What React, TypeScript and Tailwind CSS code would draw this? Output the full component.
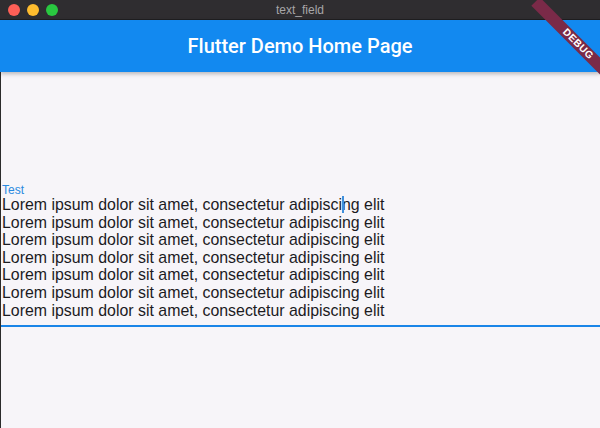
const LINES = Array.from({ length: 7 }, () => 'Lorem ipsum dolor sit amet, consectetur adipiscing elit');

const TitleBar = () => (
    <div className="relative flex h-[20px] shrink-0 items-center border-b border-[#1f1e20] bg-[#2f2d30]">
        <div className="flex items-center gap-[7px] pl-[8px]">
            <span className="h-[12px] w-[12px] rounded-full bg-[#fe5f57]" />
            <span className="h-[12px] w-[12px] rounded-full bg-[#febc2e]" />
            <span className="h-[12px] w-[12px] rounded-full bg-[#29c840]" />
        </div>
        <span className="absolute inset-x-0 text-center text-[12px] leading-none text-[#a7a6a8]">
            text_field
        </span>
    </div>
);

export default function App() {
    return (
        <div
            className="relative flex h-[428px] w-[600px] flex-col overflow-hidden bg-[#f7f5f9]"
            style={{ fontFamily: '"Liberation Sans", Arial, sans-serif' }}
        >
            <TitleBar />

            <header className="z-10 flex h-[52px] shrink-0 items-center justify-center bg-[#1289f0] shadow-[0_2px_4px_rgba(0,0,0,0.25)]">
                <h1 className="font-['Roboto',sans-serif] text-[20px] font-medium text-white">
                    Flutter Demo Home Page
                </h1>
            </header>

            <main className="flex flex-1 flex-col border-l border-[#2b2b2b] pt-[112px]">
                <label className="pl-[1px] text-[12px] leading-[12px] text-[#2a8ae0]">Test</label>
                <div className="relative border-b-2 border-[#1a85e8] pb-[6px] pl-[1px]">
                    {LINES.map((line, i) => (
                        <p key={i} className="text-[15.9px] leading-[17.6px] text-[#1c1b1f]">
                            {line}
                        </p>
                    ))}
                    <span className="absolute left-[341px] top-[0px] h-[17px] w-[2px] bg-[#3f8fdc]" />
                </div>
            </main>

            <div className="pointer-events-none absolute left-[518px] top-[38px] z-20 flex h-[12px] w-[120px] rotate-45 items-center justify-center bg-[#7a2a48]">
                <span className="text-[10px] font-bold leading-none tracking-[0.5px] text-white">DEBUG</span>
            </div>
        </div>
    );
}
